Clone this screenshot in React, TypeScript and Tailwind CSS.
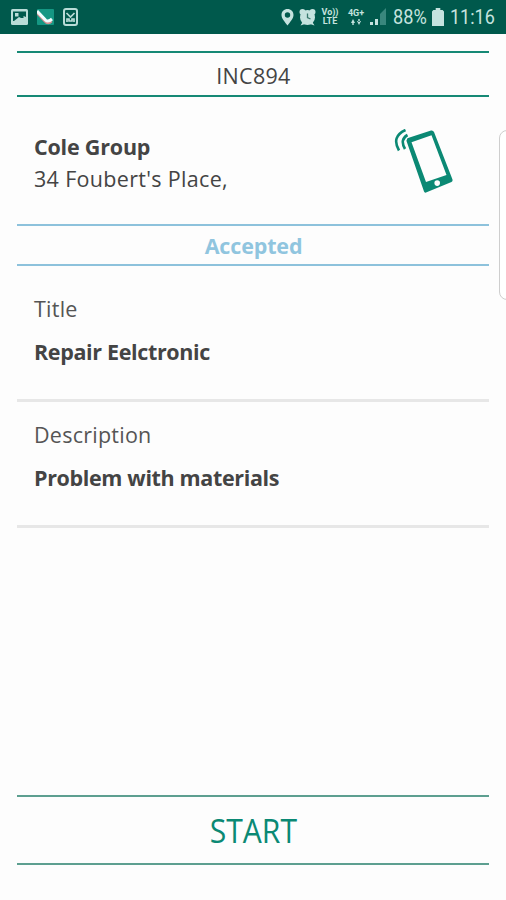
import React from "react";

function StatusBar() {
  return (
    <header className="flex h-[34px] shrink-0 items-center bg-[#00594c] pr-[10px] pl-[11px] text-[#c5e3df]">
      <svg className="mr-[9px] h-[18px] w-[17px] shrink-0" viewBox="0 0 17 18">
        <rect x="0" y="1" width="17" height="16" rx="1.5" fill="#b9dcd7" />
        <path d="M2 3.500h13V9l-2.500-1v2H10l-2-1-5 4H2z" fill="#00594c" />
        <path d="M4 5h3.500v3.500H4z" fill="#b9dcd7" />
      </svg>
      <svg className="mr-[9px] h-[18px] w-[17px] shrink-0" viewBox="0 0 17 18">
        <rect y="1" width="17" height="16" rx="1" fill="#159783" />
        <path d="M0 4.500L8 13Q11 16.500 14.500 13" fill="none" stroke="#d78f91" strokeWidth="3" />
        <path d="M0 3L8.500 12Q11 14.500 15 11" fill="none" stroke="#f1ffff" strokeWidth="3" />
      </svg>
      <svg className="h-[18px] w-[15px] shrink-0" viewBox="0 0 15 18" fill="none" stroke="#b9dcd7">
        <rect x="1" y="1" width="13" height="16" rx="2" strokeWidth="2" />
        <path d="M3.500 5l4 4 4-4M4 14v-3h2v2h3v-2h2v3" strokeWidth="1.700" />
      </svg>
      <div className="ml-auto flex items-center">
        <svg className="mr-[5px] h-[18px] w-[13px]" viewBox="0 0 13 18">
          <path fillRule="evenodd" d="M6.500 1C3 1 .5 3.500.5 7c0 3.500 3.500 7 6 10.500C9 14 12.500 10.500 12.500 7c0-3.500-2.500-6-6-6zm0 3.300a2.700 2.700 0 110 5.400 2.700 2.700 0 010-5.400z" fill="#c5e3df" />
        </svg>
        <svg className="mr-[5px] h-[18px] w-[17px]" viewBox="0 0 17 18">
          <g fill="#c5e3df">
            <circle cx="3.500" cy="4" r="3" />
            <circle cx="13.500" cy="4" r="3" />
            <circle cx="8.500" cy="9.500" r="7.500" />
            <path d="M1.500 17.500l3-5 3 3zM15.500 17.500l-3-5-3 3z" />
          </g>
          <path d="M8.500 5.500v4l3 1.500" fill="none" stroke="#39786d" strokeWidth="1.300" />
        </svg>
        <div className="mr-[8px] w-[18px] text-center font-['Roboto',sans-serif] text-[9px] leading-[9px] font-bold">
          <div>Vo))</div>
          <div>LTE</div>
        </div>
        <div className="mr-[5px] flex w-[18px] flex-col items-center font-['Roboto',sans-serif] text-[9px] leading-[9px] font-bold">
          <span>4G+</span>
          <svg className="h-[8px] w-[10px]" viewBox="0 0 10 8" fill="#c5e3df">
            <path d="M0 5l2-4 2 4zM1.300 4h1.400v3H1.300zM6 3l2 4 2-4zM7.300 1h1.400v3H7.300z" />
          </svg>
        </div>
        <svg className="mr-[7px] h-[18px] w-[16px]" viewBox="0 0 16 18">
          <path d="M0 14h3v3H0zM5 11h3v6H5z" fill="#c5e3df" />
          <path d="M10 6l2-2v13h-2zM12 4l4-4v17h-4z" fill="#39877d" />
        </svg>
        <span className="w-[39px] origin-left scale-x-[.91] font-['Roboto',sans-serif] text-[20px] leading-[36px] whitespace-nowrap">88%</span>
        <svg className="mr-[6px] h-[18px] w-[12px]" viewBox="0 0 13 18" preserveAspectRatio="none">
          <path d="M4 0h5v2h2.500L13 3.500V18H0V3.500L1.500 2H4z" fill="#c5e3df" />
        </svg>
        <span className="w-[46px] origin-left scale-x-[.9] font-['Roboto',sans-serif] text-[20px] leading-[36px] whitespace-nowrap">11:16</span>
      </div>
    </header>
  );
}

function PhoneIcon() {
  return (
    <svg className="mt-[32px] mr-[34px] h-[68px] w-[62px]" viewBox="0 0 62 68" fill="none" stroke="#0b8974">
      <path fill="#0b8974" stroke="none" fillRule="evenodd" d="M14 11.500Q14 10.300 15 10L38 2.500Q40 2 41 4L59.500 51.500Q60 53 58.500 54L33 64.500Q31.500 65 31 63.500L13.500 13Q13.300 12 14 11.500zM18.500 14.200L33 54 53.500 47 38.500 7.200zM44.200 52.300a2.800 2.800 0 100 5.600 2.800 2.800 0 000-5.600z" transform="translate(0 -1)" />
      <path d="M14.500 6Q6.500 10.500 12 20M12.500 1Q-2 7.500 6 21.500" strokeWidth="2.600" />
    </svg>
  );
}

function Field({ label, value }: { label: string; value: string }) {
  return (
    <section className="border-b-[3px] border-[#e7e7e7] px-[17px]">
      <p className="mb-[9px] h-[34px] text-[21.5px] leading-[33px] tracking-[0.25px] text-[#555]">{label}</p>
      <p className="h-[34px] text-[21.5px] leading-[33px] font-bold tracking-[-0.35px] text-[#444]">{value}</p>
      <div className="h-[30px]" />
    </section>
  );
}

export default function App() {
  return (
    <div className="relative flex h-[900px] w-[506px] flex-col overflow-hidden bg-[#fdfdfd] font-['Open_Sans','Noto_Sans',sans-serif] text-[#444]">
      <StatusBar />
      <main className="flex flex-1 flex-col px-[17px] pt-[17px] pb-[35px]">
        <h1 className="h-[46px] border-y-2 border-[#168975] pl-[1px] text-center text-[21.5px] leading-[45px] tracking-[0.3px]">INC894</h1>
        <section className="flex h-[127px] justify-between pl-[17px]">
          <div className="pt-[34px] text-[21.5px] leading-[32px]">
            <p className="font-bold tracking-[-0.2px] text-[#444]">Cole Group</p>
            <p className="tracking-[0.32px]">34 Foubert's Place,</p>
          </div>
          <PhoneIcon />
        </section>
        <div className="mb-[26px] h-[42px] border-y-2 border-[#8dc2dc] pl-[1px] text-center text-[21.5px] leading-[40px] font-bold tracking-[-0.15px] text-[#90c5df]">Accepted</div>
        <Field label="Title" value="Repair Eelctronic" />
        <div className="h-[16px]" />
        <Field label="Description" value="Problem with materials" />
        <button className="mt-auto h-[70px] border-y-2 border-[#5d9f90] pl-[1px] text-[32px] leading-[67px] text-[#0b8974]">
          <span className="inline-block scale-x-[.94]">START</span>
        </button>
      </main>
      <div className="absolute top-[130px] left-[499px] h-[170px] w-[20px] rounded-[8px] border border-[#cecece] bg-white" />
    </div>
  );
}
